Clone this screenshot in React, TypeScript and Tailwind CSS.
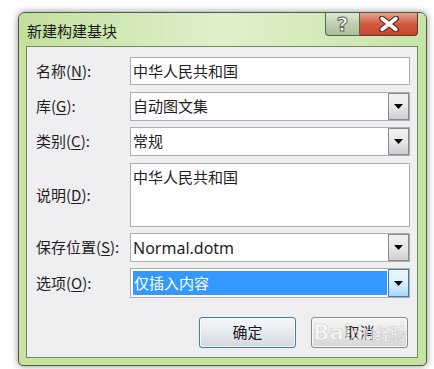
import React from "react";

const font = { fontFamily: '"Noto Sans CJK SC", "Noto Sans", sans-serif' };

function Label({ pre, k, h }: { pre: string; k: string; h: string }) {
  return (
    <div className={`w-[94px] shrink-0 flex items-center ${h} text-[15px] text-[#1e1e1e]`}>
      <span>
        {pre}(<span className="underline underline-offset-2 decoration-1">{k}</span>):
      </span>
    </div>
  );
}

function Arrow({ blue }: { blue?: boolean }) {
  return (
    <div
      className={`w-[21px] h-full shrink-0 border flex items-center justify-center ${
        blue
          ? "border-[#3c7fb1] bg-gradient-to-b from-[#eaf6fd] via-[#d9f0fc] to-[#a7d9f5]"
          : "border-[#8a8a8a] bg-gradient-to-b from-[#f2f2f2] via-[#e8e8e8] to-[#cfcfcf]"
      }`}
    >
      <svg width="9" height="5" viewBox="0 0 9 5">
        <path d="M0 0 H9 L4.5 5 Z" fill="#000" />
      </svg>
    </div>
  );
}

export default function App() {
  return (
    <div className="w-[434px] h-[369px] bg-white overflow-hidden" style={font}>
      <div className="ml-[18px] mt-[12px] w-[409px] h-[354px] rounded-t-[7px] rounded-b-[5px] border border-[#4b5a45] bg-[#c6e3a2] shadow-[0_0_7px_rgba(0,0,0,0.45)] flex flex-col relative overflow-hidden">
        {/* title bar */}
        <div className="h-[33px] shrink-0 flex justify-between bg-gradient-to-r from-[#c2e09d] via-[#dff0cb] to-[#c8e4a6]">
          <div className="pl-[8px] pt-[8px] text-[15px] text-[#1a1a1a] leading-[20px]">新建构建基块</div>
          <div className="flex mr-[8px] h-[23px]">
            <div className="w-[35px] h-full border border-t-0 border-[#56654f] rounded-bl-[4px] bg-gradient-to-b from-[#dfe9d6] via-[#bfcfb2] to-[#a9bf98] flex items-center justify-center">
              <span className="text-[20px] leading-none font-bold text-white [-webkit-text-stroke:1px_#5f6a5a]" style={{ fontFamily: '"DejaVu Sans", sans-serif' }}>
                ?
              </span>
            </div>
            <div className="w-[58px] h-full border border-t-0 border-l-0 border-[#5a3b33] rounded-br-[4px] bg-gradient-to-b from-[#e9a391] via-[#cf5a3e] to-[#c9452b] flex items-center justify-center">
              <svg width="24" height="16" viewBox="0 0 24 16">
                <path d="M5 2.5 L19 13.5 M19 2.5 L5 13.5" stroke="#5b2a20" strokeWidth="6" strokeLinecap="round" />
                <path d="M5 2.5 L19 13.5 M19 2.5 L5 13.5" stroke="#ffffff" strokeWidth="3.5" strokeLinecap="round" />
              </svg>
            </div>
          </div>
        </div>
        {/* panel */}
        <div className="mx-[7px] mr-[8px] mb-[7px] flex-1 border border-[#6f8a5c] bg-[#efeef0] pl-[9px] pr-[7px] pt-[10px] flex flex-col">
          <div className="flex h-[28px]">
            <Label pre="名称" k="N" h="h-[28px]" />
            <div className="flex-1 border border-[#abadb3] bg-white flex items-center pl-[2px] text-[15px] text-[#1e1e1e]">中华人民共和国</div>
          </div>
          <div className="flex h-[29px] mt-[7px]">
            <Label pre="库" k="G" h="h-[29px]" />
            <div className="flex-1 border border-[#abadb3] bg-white flex items-center pl-[2px] text-[15px] text-[#1e1e1e]">
              <span className="flex-1">自动图文集</span>
              <Arrow />
            </div>
          </div>
          <div className="flex h-[29px] mt-[6px]">
            <Label pre="类别" k="C" h="h-[29px]" />
            <div className="flex-1 border border-[#abadb3] bg-white flex items-center pl-[2px] text-[15px] text-[#1e1e1e]">
              <span className="flex-1">常规</span>
              <Arrow />
            </div>
          </div>
          <div className="flex h-[64px] mt-[7px]">
            <Label pre="说明" k="D" h="h-[64px]" />
            <div className="flex-1 border border-[#abadb3] bg-white pl-[2px] pt-[3px] text-[15px] leading-[20px] text-[#1e1e1e]">中华人民共和国</div>
          </div>
          <div className="flex h-[29px] mt-[6px]">
            <Label pre="保存位置" k="S" h="h-[29px]" />
            <div className="flex-1 border border-[#abadb3] bg-white flex items-center pl-[2px] text-[16px] text-[#1e1e1e]">
              <span className="flex-1" style={{ fontFamily: '"Noto Sans", sans-serif' }}>Normal.dotm</span>
              <Arrow />
            </div>
          </div>
          <div className="flex h-[30px] mt-[6px]">
            <Label pre="选项" k="O" h="h-[30px]" />
            <div className="flex-1 border border-[#abadb3] bg-white flex items-center text-[15px]">
              <div className="flex-1 self-stretch m-[2px] mr-[1px] bg-[#3399ff] text-white flex items-center pl-[1px]">仅插入内容</div>
              <Arrow blue />
            </div>
          </div>
          <div className="flex justify-end gap-[15px] mt-[19px] pr-[2px]">
            <div className="w-[97px] h-[31px] rounded-[3px] border border-[#3c7fb1] bg-gradient-to-b from-[#f5f8fa] via-[#e6eaee] to-[#d3d8dc] shadow-[inset_0_0_0_1px_rgba(255,255,255,0.8)] flex items-center justify-center text-[15px] text-[#1a1a1a]">
              确定
            </div>
            <div className="relative w-[97px] h-[31px] rounded-[3px] border border-[#8a8a8a] bg-gradient-to-b from-[#f4f4f4] via-[#e9e9e9] to-[#d6d6d6] shadow-[inset_0_0_0_1px_rgba(255,255,255,0.8)] flex items-center justify-center text-[15px] text-[#1a1a1a]">
              取消
              <div className="absolute inset-0 flex items-center justify-center pointer-events-none">
                <span className="text-[22px] font-bold text-white/60 tracking-tight [-webkit-text-stroke:0.5px_rgba(150,150,150,0.5)]" style={{ fontFamily: '"DejaVu Sans", sans-serif' }}>
                  Bai<span className="text-[18px]">du</span><span className="text-[16px]" style={font}>经验</span>
                </span>
              </div>
            </div>
          </div>
        </div>
      </div>
    </div>
  );
}
